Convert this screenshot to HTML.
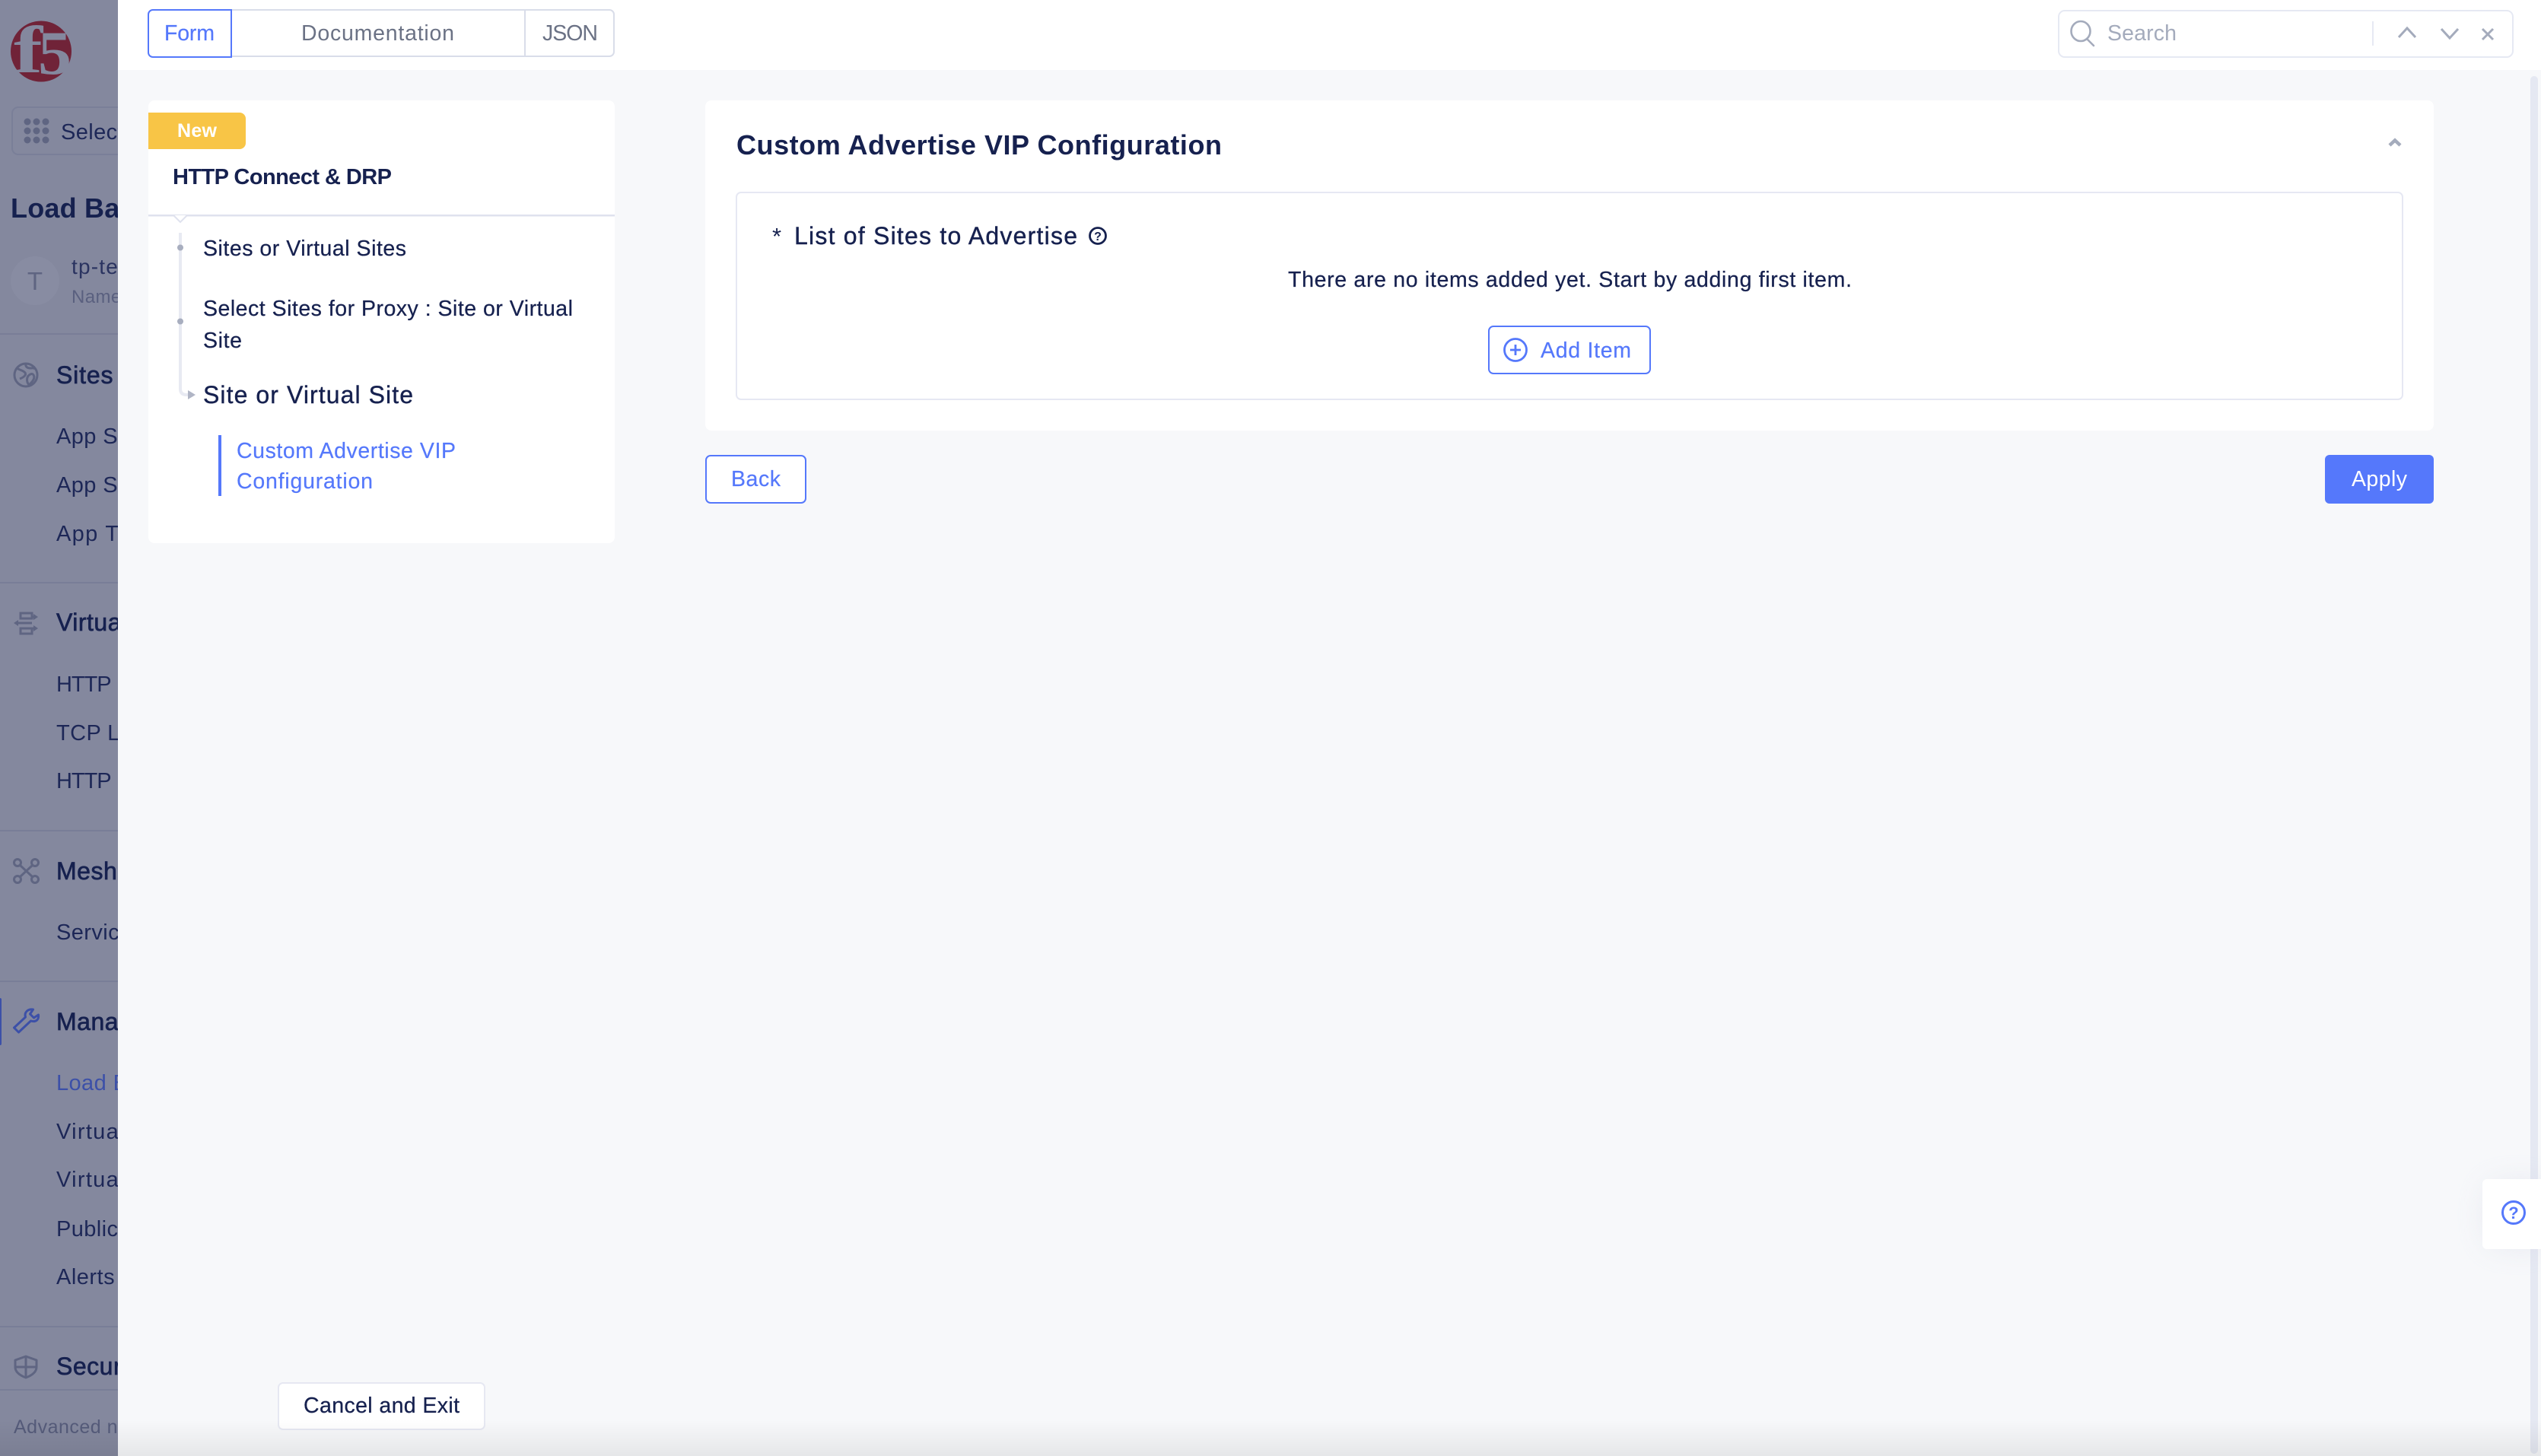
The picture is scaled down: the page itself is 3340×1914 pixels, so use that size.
<!DOCTYPE html>
<html lang="en"><head><meta charset="utf-8"><title>HTTP Connect &amp; DRP</title>
<style>
html,body{margin:0;padding:0;width:3340px;height:1914px;overflow:hidden;background:#f7f8fa}
svg{display:block;position:absolute;left:0;top:0}
text{font-family:"Liberation Sans",Arial,sans-serif;white-space:pre}
.n{fill:#16214f}
.s{font-size:29px;letter-spacing:.4px;fill:#1d2757}
.w{letter-spacing:1.300px}
.h{font-size:32px;letter-spacing:.5px;fill:#16214f;stroke:#16214f;stroke-width:.7px}
.t{font-size:28.5px}
.t.n{stroke:#16214f;stroke-width:.25px}
.t.b{stroke:#5578fb;stroke-width:.2px}
.b{fill:#5578fb}
</style></head><body>
<svg width="3340" height="1914" viewBox="0 0 3340 1914" xmlns="http://www.w3.org/2000/svg">
<defs>
<clipPath id="side"><rect x="0" y="0" width="155" height="1914"/></clipPath>
<linearGradient id="bot" x1="0" y1="0" x2="0" y2="1"><stop offset="0" stop-color="#000" stop-opacity="0"/><stop offset="1" stop-color="#000" stop-opacity=".07"/></linearGradient>
<filter id="sh" x="-60%" y="-60%" width="220%" height="220%"><feGaussianBlur stdDeviation="22"/></filter>
</defs>

<!-- main background -->
<rect x="155" y="0" width="3185" height="1914" fill="#f7f8fa"/>
<rect x="155" y="0" width="3185" height="92" fill="#fff"/>

<!-- sidebar -->
<g clip-path="url(#side)">
<rect width="155" height="1914" fill="#84889e"/>
<circle cx="54" cy="67.500" r="40" fill="#702338"/>
<text x="18" y="95" font-size="88" textLength="38" lengthAdjust="spacingAndGlyphs" style="font-family:'Liberation Serif',serif;font-weight:bold" fill="#84889e">f</text>
<text x="50" y="97" font-size="82" textLength="44" lengthAdjust="spacingAndGlyphs" style="font-family:'Liberation Serif',serif;font-weight:bold" fill="#84889e">5</text>

<rect x="16" y="141" width="160" height="62" rx="8" fill="none" stroke="#7a7f98" stroke-width="2"/>
<g fill="#5f6582"><circle cx="36" cy="160" r="4.500"/><circle cx="48" cy="160" r="4.500"/><circle cx="60" cy="160" r="4.500"/><circle cx="36" cy="172" r="4.500"/><circle cx="48" cy="172" r="4.500"/><circle cx="60" cy="172" r="4.500"/><circle cx="36" cy="184" r="4.500"/><circle cx="48" cy="184" r="4.500"/><circle cx="60" cy="184" r="4.500"/></g>
<text x="80" y="183" class="s">Select service</text>
<text x="14" y="286" font-size="36" font-weight="bold" letter-spacing=".2" class="n">Load Balancers</text>

<circle cx="46" cy="369" r="32" fill="#888ca2"/>
<text x="46" y="381" font-size="33" text-anchor="middle" fill="#5f6582">T</text>
<text x="94" y="360" font-size="28" letter-spacing="1.200" fill="#2a3360">tp-test</text>
<text x="94" y="398" font-size="24" letter-spacing=".4" fill="#5a607f">Namespace</text>
<rect y="438" width="155" height="2" fill="#797e97"/>

<g fill="none" stroke="#5f6582" stroke-width="3"><circle cx="34" cy="493" r="15"/><path d="M22 484c5 3 9 3 11 6s-2 6-7 8M34 478c-1 4 2 6 6 6 3 0 4-1 6 1M38 506c-4-5-3-12 2-14 4-2 6 3 4 7s-4 5-6 7"/></g>
<text x="74" y="504" class="h" textLength="75">Sites</text>
<text x="74" y="583" class="s">App Sites</text>
<text x="74" y="647" class="s">App Site Sets</text>
<text x="74" y="711" class="s w">App Types</text>
<rect y="765" width="155" height="2" fill="#797e97"/>

<g fill="none" stroke="#5f6582" stroke-width="3"><rect x="27" y="806" width="15" height="7"/><rect x="27" y="826" width="15" height="7"/><path d="M22 819h20M42 811h4M42 826h4"/></g>
<g fill="#5f6582"><path d="M18 819l6-4v8zM50 811l-6-4v8zM50 826l-6-4v8z"/></g>
<text x="74" y="829" class="h">Virtual Hosts</text>
<text x="74" y="909" class="s" textLength="73">HTTP</text>
<text x="74" y="973" class="s">TCP Load</text>
<text x="74" y="1036" class="s" textLength="73">HTTP</text>
<rect y="1091" width="155" height="2" fill="#797e97"/>

<g fill="none" stroke="#5f6582" stroke-width="3"><circle cx="23" cy="1134" r="4.500"/><circle cx="46" cy="1134" r="4.500"/><circle cx="23" cy="1156" r="4.500"/><circle cx="46" cy="1156" r="4.500"/><path d="M27 1138l15 14M42 1138l-15 14"/></g>
<text x="74" y="1156" class="h">Mesh</text>
<text x="74" y="1235" class="s">Service Mesh</text>
<rect y="1289" width="155" height="2" fill="#797e97"/>

<rect x="-3" y="1312" width="5" height="62" rx="2" fill="#3c50a8"/>
<path d="M18.500 1351l6 6 16-15c6 2 11-1 10-8l-6 4-5-5 4-6c-7-1-12 4-10 10z" fill="none" stroke="#3c50a8" stroke-width="3" stroke-linejoin="round"/>
<text x="74" y="1354" class="h">Manage</text>
<text x="74" y="1433" class="s" style="fill:#3c50a8">Load Balancers</text>
<text x="74" y="1497" class="s w">Virtual Hosts</text>
<text x="74" y="1560" class="s w">Virtual Sites</text>
<text x="74" y="1625" class="s">Public IPs</text>
<text x="74" y="1688" class="s" textLength="77">Alerts</text>
<rect y="1743" width="155" height="2" fill="#797e97"/>

<path d="M34 1783l14 5v9c0 7-6 11-14 14-8-3-14-7-14-14v-9zM34 1783v28M20 1797h28" fill="none" stroke="#5f6582" stroke-width="3" stroke-linejoin="round"/>
<text x="74" y="1807" class="h">Security</text>
<rect y="1826" width="155" height="2" fill="#797e97"/>
<text x="18" y="1884" font-size="25" letter-spacing=".5" fill="#555b7a">Advanced nav</text>
</g>

<!-- tabs -->
<rect x="196" y="13" width="611" height="61" rx="6" fill="#fff" stroke="#d9dde9" stroke-width="2"/>
<rect x="689" y="13" width="2" height="61" fill="#d9dde9"/>
<path d="M304 13H201a6 6 0 0 0-6 6v50a6 6 0 0 0 6 6h103z" fill="#fff" stroke="#5578fb" stroke-width="2"/>
<text x="216" y="53" class="t b" textLength="66">Form</text>
<text x="396" y="53" class="t" fill="#6b7285" textLength="201">Documentation</text>
<text x="713" y="53" class="t" fill="#6b7285" textLength="73">JSON</text>

<!-- search -->
<rect x="2706" y="14" width="597" height="61" rx="8" fill="#fff" stroke="#e6e9f3" stroke-width="2"/>
<g fill="none" stroke="#a4abbc" stroke-width="2.600" stroke-linecap="round"><ellipse cx="2735" cy="41" rx="12.500" ry="13"/><path d="M2743 51l9 9"/></g>
<text x="2770" y="53" class="t" fill="#a4abbc" textLength="91">Search</text>
<rect x="3118" y="28" width="2" height="32" fill="#e6e9f3"/>
<g fill="none" stroke="#a4abbc" stroke-width="3"><path d="M3153 49l11-12 11 12M3209 38l11 12 11-12M3263 38l14 14M3277 38l-14 14"/></g>

<!-- left panel -->
<rect x="195" y="132" width="613" height="582" rx="8" fill="#fff"/>
<path d="M195 148h120a8 8 0 0 1 8 8v32a8 8 0 0 1-8 8H195z" fill="#f8c546"/>
<text x="233" y="180" font-size="25" font-weight="bold" fill="#fff" textLength="52">New</text>
<text x="227" y="242" font-size="29" font-weight="bold" class="n" textLength="288">HTTP Connect &amp; DRP</text>
<rect x="195" y="282" width="613" height="2.500" fill="#dfe2ee"/>
<path d="M228 283l9 9 9-9" fill="#fff" stroke="#dfe2ee" stroke-width="2"/>
<path d="M237 306v205q0 8 8 8h4" fill="none" stroke="#e8eaf2" stroke-width="4"/>
<circle cx="237" cy="325.500" r="4" fill="#a8aebf"/>
<circle cx="237" cy="422.500" r="4" fill="#a8aebf"/>
<path d="M247 513l10 6-10 6z" fill="#b0b5c5"/>
<text x="267" y="336" class="t n" textLength="267">Sites or Virtual Sites</text>
<text x="267" y="415" class="t n" textLength="486">Select Sites for Proxy : Site or Virtual</text>
<text x="267" y="457" class="t n" textLength="51">Site</text>
<text x="267" y="530" font-size="32" class="n" style="stroke:#16214f;stroke-width:.4px" textLength="276">Site or Virtual Site</text>
<rect x="287" y="572" width="4" height="80" fill="#5578fb"/>
<text x="311" y="602" class="t b" textLength="288">Custom Advertise VIP</text>
<text x="311" y="642" class="t b" textLength="179">Configuration</text>

<!-- right card -->
<rect x="927" y="132" width="2272" height="434" rx="8" fill="#fff"/>
<text x="968" y="203" font-size="36" font-weight="bold" class="n" textLength="638">Custom Advertise VIP Configuration</text>
<path d="M3141 191l7-6.500 7 6.500" fill="none" stroke="#a4abbc" stroke-width="4.500"/>
<rect x="968" y="253" width="2190" height="272" rx="6" fill="#fff" stroke="#e6e8f3" stroke-width="2"/>
<text x="1015" y="321" font-size="31" class="n">*</text>
<text x="1044" y="321" font-size="32" class="n" style="stroke:#16214f;stroke-width:.4px" textLength="372">List of Sites to Advertise</text>
<circle cx="1443" cy="310" r="10.500" fill="none" stroke="#16214f" stroke-width="2.800"/>
<text x="1443" y="316" font-size="16" font-weight="bold" text-anchor="middle" class="n">?</text>
<text x="1693" y="377" class="t n" textLength="741">There are no items added yet. Start by adding first item.</text>

<rect x="1957" y="429" width="212" height="62" rx="6" fill="#fff" stroke="#5578fb" stroke-width="2"/>
<g fill="none" stroke="#5578fb" stroke-width="2.800"><circle cx="1992" cy="460" r="14.500"/><path d="M1985 460h14M1992 453v14"/></g>
<text x="2025" y="470" class="t b" textLength="119">Add Item</text>

<rect x="928" y="599" width="131" height="62" rx="6" fill="#fff" stroke="#5578fb" stroke-width="2"/>
<text x="961" y="639" class="t b" textLength="65">Back</text>
<rect x="3056" y="598" width="143" height="64" rx="6" fill="#5578fb"/>
<text x="3091" y="639" class="t" fill="#fff" textLength="73">Apply</text>

<!-- scrollbar -->
<rect x="3326" y="100" width="10" height="1811" rx="5" fill="#e5e8f2"/>

<!-- help widget -->
<rect x="3273" y="1560" width="80" height="74" fill="#c9cde0" opacity=".45" filter="url(#sh)"/>
<path d="M3340 1550h-71a6 6 0 0 0-6 6v80a6 6 0 0 0 6 6h71z" fill="#fff"/>
<circle cx="3304" cy="1594" r="14.500" fill="none" stroke="#5578fb" stroke-width="3"/>
<text x="3304" y="1602" font-size="22" font-weight="bold" text-anchor="middle" fill="#5578fb">?</text>

<!-- cancel -->
<rect x="366" y="1818" width="271" height="61" rx="6" fill="#fff" stroke="#e6e8f2" stroke-width="2"/>
<text x="399" y="1857" class="t n" textLength="205">Cancel and Exit</text>

<!-- bottom fade -->
<rect x="0" y="1866" width="3340" height="48" fill="url(#bot)"/>
</svg>
</body></html>
